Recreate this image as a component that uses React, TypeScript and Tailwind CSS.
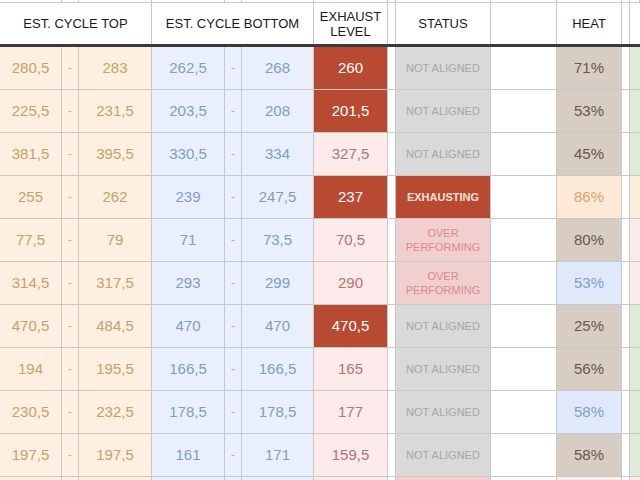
import React from "react";

type Row = {
  top: [string, string];
  bottom: [string, string];
  exhaust: string;
  dark: boolean;
  status: "na" | "ex" | "over";
  heat: string;
  heatTone: "tan" | "orange" | "blue";
  edge: "green" | "orange" | "pink";
};

const rows: Row[] = [
  { top: ["280,5", "283"], bottom: ["262,5", "268"], exhaust: "260", dark: true, status: "na", heat: "71%", heatTone: "tan", edge: "green" },
  { top: ["225,5", "231,5"], bottom: ["203,5", "208"], exhaust: "201,5", dark: true, status: "na", heat: "53%", heatTone: "tan", edge: "green" },
  { top: ["381,5", "395,5"], bottom: ["330,5", "334"], exhaust: "327,5", dark: false, status: "na", heat: "45%", heatTone: "tan", edge: "green" },
  { top: ["255", "262"], bottom: ["239", "247,5"], exhaust: "237", dark: true, status: "ex", heat: "86%", heatTone: "orange", edge: "orange" },
  { top: ["77,5", "79"], bottom: ["71", "73,5"], exhaust: "70,5", dark: false, status: "over", heat: "80%", heatTone: "tan", edge: "pink" },
  { top: ["314,5", "317,5"], bottom: ["293", "299"], exhaust: "290", dark: false, status: "over", heat: "53%", heatTone: "blue", edge: "pink" },
  { top: ["470,5", "484,5"], bottom: ["470", "470"], exhaust: "470,5", dark: true, status: "na", heat: "25%", heatTone: "tan", edge: "green" },
  { top: ["194", "195,5"], bottom: ["166,5", "166,5"], exhaust: "165", dark: false, status: "na", heat: "56%", heatTone: "tan", edge: "green" },
  { top: ["230,5", "232,5"], bottom: ["178,5", "178,5"], exhaust: "177", dark: false, status: "na", heat: "58%", heatTone: "blue", edge: "green" },
  { top: ["197,5", "197,5"], bottom: ["161", "171"], exhaust: "159,5", dark: false, status: "na", heat: "58%", heatTone: "tan", edge: "green" },
];

const cols =
  "grid grid-cols-[62px_17px_73px_73px_17px_72px_74px_8px_95px_66px_65px_8px_1fr]";

const cell = "flex items-center justify-center border-r border-[#c8c8c8]";

const heatCls = {
  tan: "bg-[#d7cdc3] text-[#6b5641]",
  orange: "bg-[#fce9d6] text-[#d8a76a]",
  blue: "bg-[#e0e9fb] text-[#7e9dd0]",
};

const edgeCls = {
  green: "bg-[#dfebd6]",
  orange: "bg-[#fbeedd]",
  pink: "bg-[#fdeaea]",
};

function Status({ kind }: { kind: Row["status"] }) {
  if (kind === "ex")
    return (
      <div className={`${cell} border-[#8f3a28] bg-[#b84a32] text-[11px] font-bold text-[#f6e2dc]`}>
        EXHAUSTING
      </div>
    );
  if (kind === "over")
    return (
      <div className={`${cell} border-[#b9a0a0] bg-[#f1cfcf] text-[11px] leading-[14px] text-[#d98a8a] flex-col text-center`}>
        <span>OVER</span>
        <span>PERFORMING</span>
      </div>
    );
  return (
    <div className={`${cell} border-[#a8a8a8] bg-[#d9d9d9] text-[11px] text-[#a6a6a6]`}>
      NOT ALIGNED
    </div>
  );
}

export default function App() {
  return (
    <div
      className="w-[640px] h-[480px] overflow-hidden bg-white"
      style={{ fontFamily: '"Liberation Sans", Arial, sans-serif' }}
    >
      {/* sliver of the row above */}
      <div className={`${cols} h-[3px] border-b border-[#c8c8c8]`}>
        {Array.from({ length: 13 }).map((_, i) => (
          <div key={i} className="border-r border-[#c8c8c8]" />
        ))}
      </div>

      {/* header */}
      <div className="flex h-[44px] border-b-[3px] border-[#3a3a3a] text-[13px] text-[#1a1a1a]">
        <div className="w-[152px] flex items-center justify-center border-r border-[#c8c8c8]">
          EST. CYCLE TOP
        </div>
        <div className="w-[162px] flex items-center justify-center border-r border-[#c8c8c8]">
          EST. CYCLE BOTTOM
        </div>
        <div className="w-[74px] flex flex-col items-center justify-center border-r border-[#c8c8c8] leading-[15px]">
          <span>EXHAUST</span>
          <span>LEVEL</span>
        </div>
        <div className="w-[8px] border-r border-[#c8c8c8]" />
        <div className="w-[95px] flex items-center justify-center border-r border-[#c8c8c8]">
          STATUS
        </div>
        <div className="w-[66px] border-r border-[#c8c8c8]" />
        <div className="w-[65px] flex items-center justify-center border-r border-[#c8c8c8]">
          HEAT
        </div>
        <div className="w-[8px] border-r border-[#c8c8c8]" />
        <div className="flex-1" />
      </div>

      {rows.map((r, i) => (
        <div key={i} className={`${cols} h-[43px] border-b border-[#c8c8c8] text-[15px]`}>
          <div className={`${cell} bg-[#fdf0e1] text-[#c8a068]`}>{r.top[0]}</div>
          <div className={`${cell} bg-[#fdf0e1] text-[#d2b48c] text-[13px]`}>-</div>
          <div className={`${cell} bg-[#fdf0e1] text-[#c8a068]`}>{r.top[1]}</div>
          <div className={`${cell} bg-[#e9f0fc] text-[#7f9cc6]`}>{r.bottom[0]}</div>
          <div className={`${cell} bg-[#e9f0fc] text-[#9cb2d2] text-[13px]`}>-</div>
          <div className={`${cell} bg-[#e9f0fc] text-[#7f9cc6]`}>{r.bottom[1]}</div>
          <div
            className={
              r.dark
                ? `${cell} border-[#8f3a28] bg-[#b84a32] text-white`
                : `${cell} bg-[#fdeaea] text-[#b57373]`
            }
          >
            {r.exhaust}
          </div>
          <div className={cell} />
          <Status kind={r.status} />
          <div className={cell} />
          <div className={`${cell} border-[#a39b93] ${heatCls[r.heatTone]}`}>{r.heat}</div>
          <div className={cell} />
          <div className={edgeCls[r.edge]} />
        </div>
      ))}

      {/* top of the next row, cut by the window */}
      <div className={`${cols} h-[43px]`}>
        <div className={`${cell} bg-[#fdf0e1]`} />
        <div className={`${cell} bg-[#fdf0e1]`} />
        <div className={`${cell} bg-[#fdf0e1]`} />
        <div className={`${cell} bg-[#e9f0fc]`} />
        <div className={`${cell} bg-[#e9f0fc]`} />
        <div className={`${cell} bg-[#e9f0fc]`} />
        <div className={`${cell} bg-[#fdeaea]`} />
        <div className={cell} />
        <div className={`${cell} border-[#b9a0a0] bg-[#f1cfcf]`} />
        <div className={cell} />
        <div className={`${cell} border-[#a39b93] bg-[#fdeaea]`} />
        <div className={cell} />
        <div className="bg-[#fdeaea]" />
      </div>
    </div>
  );
}
